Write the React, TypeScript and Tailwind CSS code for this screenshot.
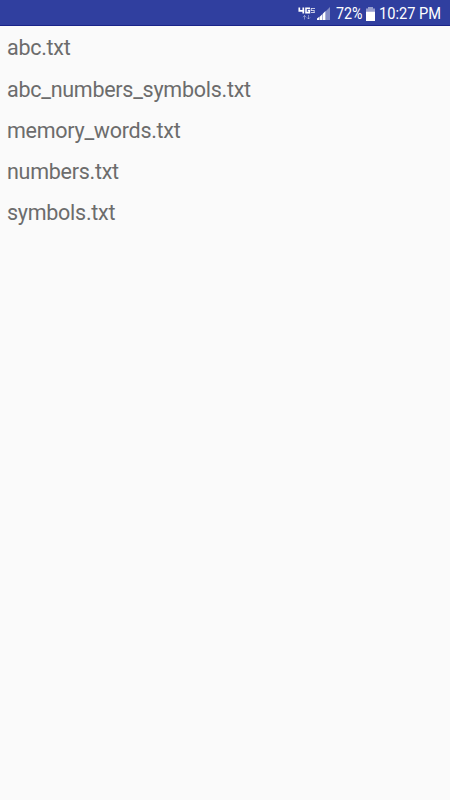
const files = [
  'abc.txt',
  'abc_numbers_symbols.txt',
  'memory_words.txt',
  'numbers.txt',
  'symbols.txt',
];

function NetworkIcon() {
  return (
    <svg className="shrink-0" width="17" height="14" viewBox="0 0 17 14" fill="none" stroke="#fff">
      <path d="M1.3 0.5V3.8H6.3M5.3 0.5V6.5" strokeWidth="1.7" />
      <path d="M12 1.3H8V5.6H11.4V3.5H9.8" strokeWidth="1.6" />
      <path d="M17 1.5H13.2M13.2 3.5H16.5M13 5.5H16.5M13.3 1V4M16.2 3.5V6" strokeWidth="1" opacity=".7" />
      <path d="M6.5 12.5V8.5M5 10.2L6.5 8.5L8 10.2M10.5 8V12M9 10.5L10.5 12L12 10.5" strokeWidth="1" opacity=".4" />
    </svg>
  );
}

function SignalIcon() {
  return (
    <svg className="shrink-0" width="13" height="13" viewBox="0 0 13 13" fill="#fff">
      <path d="M9 4L13 0V13H9Z" opacity=".4" />
      <path d="M0 13V11.5L2 10V13ZM3 13V9.5L5 7.5V13ZM6 13V6.5L8 4.5V13Z" />
      <path d="M2 10L3 9.5V13H2ZM5 7.5L6 6.5V13H5ZM8 4.5L9 4V13H8Z" opacity=".6" />
    </svg>
  );
}

function BatteryIcon() {
  return (
    <svg className="shrink-0" width="9" height="14" viewBox="0 0 9 14" fill="#fff">
      <path d="M2 0H7V1.5H9V4.5H0V1.5H2Z" opacity=".5" />
      <path d="M0 4.5H9V14H0Z" />
    </svg>
  );
}

function StatusBar() {
  return (
    <header className="flex h-[26px] items-center border-b border-[#1a2489] bg-[#303f9f] pl-[298px] pt-[2px] text-[17px] text-white">
      <NetworkIcon />
      <div className="ml-[2px] shrink-0">
        <SignalIcon />
      </div>
      <span className="ml-[6px] w-[27px] shrink-0 origin-left scale-x-[0.84] whitespace-nowrap">72%</span>
      <div className="ml-[3px] shrink-0">
        <BatteryIcon />
      </div>
      <span className="ml-[4px] w-[62px] shrink-0 origin-left scale-x-[0.86] whitespace-nowrap">10:27 PM</span>
    </header>
  );
}

export default function App() {
  return (
    <div className="h-screen overflow-hidden bg-[#fafafa] font-['Roboto',sans-serif]">
      <StatusBar />
      <ul className="pt-[2px] text-[21.5px] tracking-[-0.27px] text-[#6c6c6c]">
        {files.map((file) => (
          <li key={file} className="flex h-[41.2px] items-center pl-[7px]">
            {file}
          </li>
        ))}
      </ul>
    </div>
  );
}
